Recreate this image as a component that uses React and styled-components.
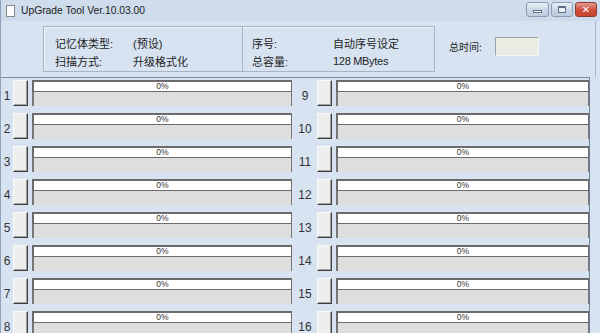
import React from 'react';
import styled, { createGlobalStyle } from 'styled-components';

const GlobalStyle = createGlobalStyle`
  html, body {
    margin: 0;
    padding: 0;
    background: #d6e2f0;
  }
  body {
    font-family: "Liberation Sans", "Noto Sans CJK SC", sans-serif;
    font-size: 11px;
    color: #1e1e1e;
  }
`;

const Window = styled.div`
  width: 600px;
  height: 333px;
  overflow: hidden;
  background: #d7e3f1;
  border-left: 1px solid #8ea3bb;
  box-sizing: border-box;
  display: flex;
  flex-direction: column;
`;

const TitleBar = styled.div`
  height: 21px;
  flex: none;
  display: flex;
  align-items: center;
  padding-left: 5px;
  background: linear-gradient(#d0dded, #ccdaeb);
`;

const DocIcon = styled.div`
  width: 9px;
  height: 12px;
  margin-right: 6px;
  background: #fff;
  border: 1px solid #8a8a8a;
  box-sizing: border-box;
`;

const Title = styled.span`
  font-family: "Liberation Sans", sans-serif;
  font-size: 10.3px;
  color: #1b1b1b;
  flex: 1;
`;

const Controls = styled.div`
  display: flex;
  gap: 2px;
  margin-right: 3px;
  margin-top: -2px;
`;

const CtlButton = styled.div`
  width: ${(p) => p.w}px;
  height: 15px;
  border-radius: 3px;
  border: 1px solid ${(p) => (p.close ? '#8a3a32' : '#8c9db3')};
  box-sizing: border-box;
  background: ${(p) =>
    p.close
      ? 'linear-gradient(#e39a8c, #cf4c3a 55%, #c9452f)'
      : 'linear-gradient(#eaf0f7, #c9d6e6 55%, #bccbde)'};
  display: flex;
  align-items: center;
  justify-content: center;
`;

const MinGlyph = styled.div`
  width: 9px;
  height: 3px;
  margin-top: 4px;
  background: #fff;
  border: 1px solid #5f6f83;
  box-sizing: border-box;
`;

const MaxGlyph = styled.div`
  width: 8px;
  height: 7px;
  border: 1px solid #5f6f83;
  border-top-width: 2px;
  background: #eef2f7;
  box-sizing: border-box;
`;

const CloseGlyph = styled.span`
  color: #fff;
  font-family: "DejaVu Sans", sans-serif;
  font-weight: bold;
  font-size: 10px;
  line-height: 1;
`;

const Header = styled.div`
  height: 56px;
  flex: none;
  display: flex;
  align-items: flex-start;
  padding-top: 5px;
  box-sizing: border-box;
  border-right: 1px solid #a9b8c9;
  margin-right: 4px;
`;

const GroupBox = styled.div`
  margin-left: 42px;
  width: 392px;
  height: 46px;
  display: flex;
  border: 1px solid #a6b4c4;
  box-shadow: inset 1px 1px 0 #eef3f9;
  box-sizing: border-box;
`;

const GroupSection = styled.div`
  width: ${(p) => p.w}px;
  padding-left: ${(p) => p.pad}px;
  padding-top: 7px;
  box-sizing: border-box;
  display: grid;
  grid-template-columns: ${(p) => p.labelW}px auto;
  grid-auto-rows: 18px;
  border-right: ${(p) => (p.divider ? '1px solid #a6b4c4' : 'none')};
  align-items: center;
`;

const InfoText = styled.span`
  font-family: "Liberation Sans", "Noto Sans CJK SC", sans-serif;
  font-size: 11px;
  white-space: nowrap;
  letter-spacing: ${(p) => (p.latin ? '-0.3px' : '0')};
`;

const TimeArea = styled.div`
  display: flex;
  align-items: center;
  margin-left: 14px;
  margin-top: 11px;
  gap: 13px;
`;

const TimeLabel = styled.span`
  font-size: 10px;
  font-family: "Noto Sans CJK SC", sans-serif;
`;

const TimeBox = styled.div`
  width: 44px;
  height: 19px;
  background: #ebeae3;
  border: 1px solid;
  border-color: #9ea3a8 #f6f8fb #f6f8fb #9ea3a8;
  box-sizing: border-box;
`;

const RowsPanel = styled.div`
  flex: 1;
  width: 589px;
  border-top: 1px solid #7d8fa5;
  border-right: 1px solid #6f7f92;
  box-sizing: border-box;
  padding-top: 2px;
  display: grid;
  grid-template-columns: 291px 297px;
  grid-template-rows: repeat(8, 33px);
  grid-auto-flow: column;
`;

const Cell = styled.div`
  display: flex;
  align-items: flex-start;
`;

const SlotLabel = styled.span`
  width: ${(p) => p.w}px;
  flex: none;
  text-align: center;
  font-family: "Liberation Sans", sans-serif;
  font-size: 12px;
  color: #333;
  margin-top: 9px;
  margin-left: ${(p) => p.ml}px;
`;

const SlotButton = styled.div`
  width: 15px;
  height: 26px;
  flex: none;
  background: #eeeeee;
  border: 1px solid;
  border-color: #fbfbfb #404040 #404040 #fbfbfb;
  box-shadow: inset -1px -1px 0 #a0a0a0;
  box-sizing: border-box;
`;

const Progress = styled.div`
  flex: 1;
  margin-left: 4px;
  display: flex;
  flex-direction: column;
`;

const Bar = styled.div`
  height: 12px;
  background: #fff;
  border: 1px solid #6b6b6b;
  border-top-width: 2px;
  border-left-width: 2px;
  box-sizing: border-box;
  text-align: center;
  font-family: "Liberation Sans", sans-serif;
  font-size: 8.5px;
  line-height: 9px;
  color: #333;
`;

const Track = styled.div`
  height: 14px;
  background: #dedede;
  border-left: 2px solid #777;
  border-right: 1px solid #777;
  box-sizing: border-box;
`;

const Slot = ({ n, right }) => (
  <Cell>
    <SlotLabel w={right ? 24 : 12} ml={right ? 1 : 0}>
      {n}
    </SlotLabel>
    <SlotButton />
    <Progress>
      <Bar>0%</Bar>
      <Track />
    </Progress>
  </Cell>
);

export default function App() {
  const slots = Array.from({ length: 16 }, (_, i) => i + 1);
  return (
    <>
      <GlobalStyle />
      <Window>
        <TitleBar>
          <DocIcon />
          <Title>UpGrade Tool Ver.10.03.00</Title>
          <Controls>
            <CtlButton w={23}>
              <MinGlyph />
            </CtlButton>
            <CtlButton w={22}>
              <MaxGlyph />
            </CtlButton>
            <CtlButton w={22} close>
              <CloseGlyph>✕</CloseGlyph>
            </CtlButton>
          </Controls>
        </TitleBar>
        <Header>
          <GroupBox>
            <GroupSection w={199} pad={11} labelW={78} divider>
              <InfoText>记忆体类型:</InfoText>
              <InfoText>(预设)</InfoText>
              <InfoText>扫描方式:</InfoText>
              <InfoText>升级格式化</InfoText>
            </GroupSection>
            <GroupSection w={191} pad={9} labelW={81}>
              <InfoText>序号:</InfoText>
              <InfoText>自动序号设定</InfoText>
              <InfoText>总容量:</InfoText>
              <InfoText latin>128 MBytes</InfoText>
            </GroupSection>
          </GroupBox>
          <TimeArea>
            <TimeLabel>总时间:</TimeLabel>
            <TimeBox />
          </TimeArea>
        </Header>
        <RowsPanel>
          {slots.map((n) => (
            <Slot key={n} n={n} right={n > 8} />
          ))}
        </RowsPanel>
      </Window>
    </>
  );
}
